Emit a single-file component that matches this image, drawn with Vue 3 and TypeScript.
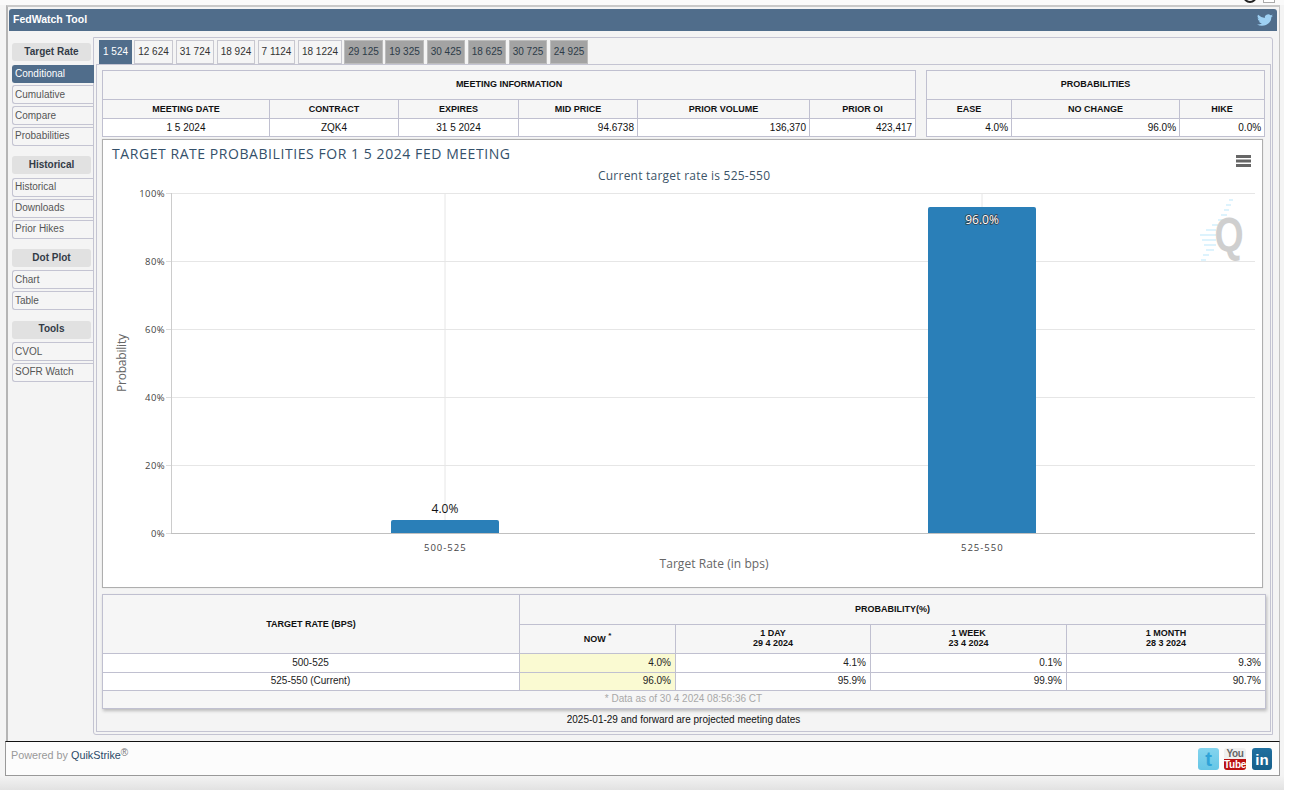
<script setup lang="ts">
interface NavGroup { title: string; items: string[] }
const nav: NavGroup[] = [
  { title: 'Target Rate', items: ['Conditional', 'Cumulative', 'Compare', 'Probabilities'] },
  { title: 'Historical', items: ['Historical', 'Downloads', 'Prior Hikes'] },
  { title: 'Dot Plot', items: ['Chart', 'Table'] },
  { title: 'Tools', items: ['CVOL', 'SOFR Watch'] },
]
const tabs = [
  { t: '1 524', w: 33, m: 2, k: 'on' }, { t: '12 624', w: 39, m: 3, k: '' }, { t: '31 724', w: 38, m: 3, k: '' },
  { t: '18 924', w: 38, m: 3, k: '' }, { t: '7 1124', w: 37, m: 3, k: '' }, { t: '18 1224', w: 44, m: 2, k: '' },
  { t: '29 125', w: 39, m: 2, k: 'off' }, { t: '19 325', w: 39, m: 3, k: 'off' }, { t: '30 425', w: 38, m: 3, k: 'off' },
  { t: '18 625', w: 38, m: 3, k: 'off' }, { t: '30 725', w: 38, m: 3, k: 'off' }, { t: '24 925', w: 38, m: 0, k: 'off' },
]
const infoCols = [167, 129, 120, 119, 172, 106]
const infoHead = ['MEETING DATE', 'CONTRACT', 'EXPIRES', 'MID PRICE', 'PRIOR VOLUME', 'PRIOR OI']
const infoRow = ['1 5 2024', 'ZQK4', '31 5 2024', '94.6738', '136,370', '423,417']
const probCols = [85, 168, 85]
const probHead = ['EASE', 'NO CHANGE', 'HIKE']
const probRow = ['4.0%', '96.0%', '0.0%']
const grid = [
  { y: 193, l: '100%' }, { y: 261, l: '80%' }, { y: 329, l: '60%' },
  { y: 397, l: '40%' }, { y: 465, l: '20%' }, { y: 533, l: '0%' },
]
const stripes = [
  [1229, 199, 4], [1226, 204, 5], [1224, 209, 5], [1221, 214, 6], [1218, 219, 8],
  [1212, 224, 6], [1206, 229, 10], [1200, 234, 16], [1202, 239, 14], [1204, 244, 12],
  [1206, 249, 8], [1203, 254, 6], [1201, 259, 5],
]
const rows = [
  ['500-525', '4.0%', '4.1%', '0.1%', '9.3%'],
  ['525-550 (Current)', '96.0%', '95.9%', '99.9%', '90.7%'],
]
const periods = [
  ['1 DAY', '29 4 2024'], ['1 WEEK', '23 4 2024'], ['1 MONTH', '28 3 2024'],
]
</script>

<template>
  <div class="page">
    <div class="topstrip">
      <span class="ring"></span>
      <span class="square"></span>
    </div>
    <div class="frame">
      <header class="bar">
        <span class="bartitle">FedWatch Tool</span>
        <svg class="bird" viewBox="0 0 24 24" width="16" height="14" preserveAspectRatio="none">
          <path fill="#9dd0f3" d="M24 4.6a9.8 9.8 0 0 1-2.8.8 4.9 4.9 0 0 0 2.2-2.7 9.8 9.8 0 0 1-3.1 1.2 4.9 4.9 0 0 0-8.4 4.5A14 14 0 0 1 1.7 3.2a4.9 4.9 0 0 0 1.5 6.6 4.9 4.9 0 0 1-2.2-.6v.1a4.9 4.9 0 0 0 3.9 4.8 4.9 4.9 0 0 1-2.2.1 4.9 4.9 0 0 0 4.6 3.4A9.9 9.9 0 0 1 0 19.5a14 14 0 0 0 7.5 2.2c9 0 14-7.5 14-14v-.6A10 10 0 0 0 24 4.6z" />
        </svg>
      </header>
      <div class="body">
        <nav class="side">
          <section v-for="g in nav" :key="g.title" class="group">
            <div class="ghead">{{ g.title }}</div>
            <div v-for="i in g.items" :key="i" class="gitem" :class="{ sel: i === 'Conditional' }">{{ i }}</div>
          </section>
        </nav>
        <div class="tabarea">
          <div class="tabs">
            <div v-for="t in tabs" :key="t.t" class="tab" :class="t.k" :style="{ width: t.w + 'px', marginRight: t.m + 'px' }">{{ t.t }}</div>
          </div>
          <main class="inner">
            <div class="tables">
              <table class="info">
                <colgroup><col v-for="(c, i) in infoCols" :key="i" :style="{ width: c + 'px' }" /></colgroup>
                <tbody>
                  <tr class="r1"><th :colspan="6">MEETING INFORMATION</th></tr>
                  <tr class="r2"><th v-for="h in infoHead" :key="h">{{ h }}</th></tr>
                  <tr class="r3">
                    <td class="c">{{ infoRow[0] }}</td>
                    <td class="c">{{ infoRow[1] }}</td>
                    <td class="c">{{ infoRow[2] }}</td>
                    <td>{{ infoRow[3] }}</td>
                    <td>{{ infoRow[4] }}</td>
                    <td>{{ infoRow[5] }}</td>
                  </tr>
                </tbody>
              </table>
              <table class="prob">
                <colgroup><col v-for="(c, i) in probCols" :key="i" :style="{ width: c + 'px' }" /></colgroup>
                <tbody>
                  <tr class="r1"><th :colspan="3">PROBABILITIES</th></tr>
                  <tr class="r2"><th v-for="h in probHead" :key="h">{{ h }}</th></tr>
                  <tr class="r3"><td v-for="p in probRow" :key="p">{{ p }}</td></tr>
                </tbody>
              </table>
            </div>
            <div class="chart">
              <svg viewBox="103 140 1159 447" width="1159" height="447" class="plot">
                <text x="112" y="159" class="title" textLength="398">TARGET RATE PROBABILITIES FOR 1 5 2024 FED MEETING</text>
                <text x="684" y="180" class="sub" text-anchor="middle" textLength="172">Current target rate is 525-550</text>
                <g fill="#666">
                  <rect x="1236" y="155" width="15" height="3" />
                  <rect x="1236" y="159.5" width="15" height="3" />
                  <rect x="1236" y="164" width="15" height="3" />
                </g>
                <g fill="#ddf3fd">
                  <rect v-for="(s, i) in stripes" :key="i" :x="s[0]" :y="s[1]" :width="s[2]" height="2" />
                </g>
                <text transform="translate(1229 251) scale(0.78 1)" class="q" text-anchor="middle">Q</text>
                <line x1="445" x2="445" y1="193" y2="533" stroke="#e6e6e6" />
                <line x1="982" x2="982" y1="193" y2="533" stroke="#e6e6e6" />
                <line v-for="g in grid.slice(0, 5)" :key="g.y" x1="171" x2="1255" :y1="g.y + 0.5" :y2="g.y + 0.5" stroke="#e6e6e6" />
                <line x1="171.5" x2="171.5" y1="193" y2="533" stroke="#ccc" />
                <line x1="171" x2="1255" y1="533.5" y2="533.5" stroke="#c0c0c0" />
                <line v-for="g in grid" :key="'t' + g.y" x1="166" x2="171" :y1="g.y + 0.5" :y2="g.y + 0.5" stroke="#ddd" />
                <text v-for="g in grid" :key="'l' + g.y" x="165" :y="g.y + 4" class="tick" text-anchor="end">{{ g.l }}</text>
                <path d="M391 533v-11a2 2 0 0 1 2-2h104a2 2 0 0 1 2 2v11z" fill="#2a7fb8" />
                <path d="M928 533V209a2 2 0 0 1 2-2h104a2 2 0 0 1 2 2v324z" fill="#2a7fb8" />
                <text x="445" y="513" class="dl" text-anchor="middle">4.0%</text>
                <text x="982" y="224" class="dl white" text-anchor="middle">96.0%</text>
                <text x="445" y="551" class="tick" text-anchor="middle" textLength="42">500-525</text>
                <text x="982" y="551" class="tick" text-anchor="middle" textLength="42">525-550</text>
                <text x="714" y="568" class="axis" text-anchor="middle" textLength="109">Target Rate (in bps)</text>
                <text transform="translate(126 363) rotate(-90)" class="axis" text-anchor="middle" textLength="58">Probability</text>
              </svg>
            </div>
            <table class="rates">
              <colgroup>
                <col style="width: 417px" /><col style="width: 156px" /><col style="width: 195px" /><col style="width: 196px" /><col style="width: 199px" />
              </colgroup>
              <tbody>
                <tr class="h1"><th rowspan="2" class="tr">TARGET RATE (BPS)</th><th colspan="4">PROBABILITY(%)</th></tr>
                <tr class="h2">
                  <th class="tr">NOW <sup>*</sup></th>
                  <th v-for="p in periods" :key="p[0]">{{ p[0] }}<br />{{ p[1] }}</th>
                </tr>
                <tr v-for="(r, i) in rows" :key="r[0]" class="d" :class="'d' + i">
                  <td class="c">{{ r[0] }}</td>
                  <td class="now">{{ r[1] }}</td>
                  <td>{{ r[2] }}</td>
                  <td>{{ r[3] }}</td>
                  <td>{{ r[4] }}</td>
                </tr>
                <tr class="foot"><td colspan="5">* Data as of 30 4 2024 08:56:36 CT</td></tr>
              </tbody>
            </table>
            <div class="note">2025-01-29 and forward are projected meeting dates</div>
          </main>
        </div>
      </div>
    </div>
    <footer class="footer">
      <div class="powered">Powered by <b>QuikStrike</b><sup>®</sup></div>
      <div class="social">
        <div class="ic tw"><span>t</span></div>
        <div class="ic yt"><span class="you">You</span><span class="tube">Tube</span></div>
        <div class="ic li"><span>in</span></div>
      </div>
    </footer>
  </div>
</template>

<style scoped>
.page {
  width: 1284px;
  height: 790px;
  background: linear-gradient(#f4f4f4 0, #f4f4f4 775px, #e2e2e2 790px);
  font-family: "Liberation Sans", Arial, sans-serif;
  overflow: hidden;
  box-sizing: border-box;
  color: #222;
}
.topstrip {
  height: 5px;
  background: #fafafa;
  position: relative;
  overflow: hidden;
}
.ring {
  position: absolute;
  left: 1243px;
  top: -11px;
  width: 10px;
  height: 10px;
  border: 2px solid #222;
  border-radius: 50%;
}
.square {
  position: absolute;
  left: 1263px;
  top: -9px;
  width: 10px;
  height: 10px;
  border: 1px solid #aaa;
  background: #fff;
}
.frame {
  margin-left: 6px;
  width: 1274px;
  height: 736px;
  box-sizing: border-box;
  border-top: 2px solid #c9c9c9;
  border-left: 2px solid #b5b5b5;
  border-right: 1px solid #c4c4c4;
  padding: 2px 0 0 1px;
  background: #f4f4f4;
}
.bar {
  width: 1268px;
  height: 22px;
  background: #506d8b;
  border-radius: 3px 3px 0 0;
  color: #fff;
  font-size: 10.5px;
  font-weight: bold;
  padding: 0 4px;
  box-sizing: border-box;
  display: flex;
  align-items: center;
  justify-content: space-between;
}
.bartitle { padding-bottom: 2px; }
.body {
  display: flex;
  padding-top: 6px;
}
.side {
  width: 81px;
  margin-left: 3px;
  padding-top: 6px;
  flex: none;
  display: flex;
  flex-direction: column;
  gap: 10px;
  position: relative;
  z-index: 1;
}
.group {
  display: flex;
  flex-direction: column;
  gap: 2px;
}
.group:last-child { margin-top: 1px; }
.group:last-child .ghead { line-height: 15px; }
.ghead {
  width: 79px;
  height: 18px;
  line-height: 17px;
  background: #e1e1e1;
  border-radius: 3px;
  text-align: center;
  font-size: 10px;
  font-weight: bold;
  color: #333b47;
  margin-bottom: 2px;
}
.group:nth-child(n + 3) .ghead { margin-bottom: 1px; }
.gitem {
  width: 81px;
  height: 19px;
  line-height: 17px;
  box-sizing: border-box;
  font-size: 10px;
  padding-left: 2px;
  color: #555;
  border: 1px solid #c4c4d2;
  border-right: 0;
  border-radius: 3px 0 0 3px;
  background: #f5f5f5;
}
.group:nth-child(2) .gitem,
.gitem:nth-child(5),
.gitem:last-child { line-height: 15px; }
.group:nth-child(3) .gitem { line-height: 17px; }
.gitem.sel {
  background: #506d8b;
  color: #fff;
  width: 82px;
  height: 18px;
  line-height: 16px;
  border-color: #506d8b;
}
.tabarea {
  width: 1180px;
  height: 698px;
  box-sizing: border-box;
  border: 1px solid #c4c4d2;
  border-radius: 0 3px 0 3px;
  padding: 2px 1px 2px 2px;
  display: flex;
  flex-direction: column;
}
.tabs {
  display: flex;
  height: 24px;
  padding-left: 3px;
}
.tab {
  box-sizing: border-box;
  height: 24px;
  line-height: 22px;
  border: 1px solid #c8c8d0;
  font-size: 10px;
  text-align: center;
  color: #333;
  background: #f5f5f5;
}
.tab.on {
  background: #506d8b;
  color: #fff;
  border-color: #506d8b;
}
.tab.off {
  background: #a3a3a3;
  border-color: #bcbcbc;
  color: #2d3b48;
}
.inner {
  flex: 1;
  border: 1px solid #c4c4d2;
  padding: 5px;
  display: flex;
  flex-direction: column;
  align-items: flex-start;
}
.tables {
  display: flex;
  gap: 10px;
}
table {
  border-collapse: collapse;
  table-layout: fixed;
  font-size: 10px;
}
th, td {
  border: 1px solid #c0c0d0;
  padding: 0 3px;
  box-sizing: border-box;
  color: #111;
}
th {
  background: #f6f6f6;
  font-weight: bold;
  text-align: center;
  font-size: 9px;
  padding-bottom: 2px;
}
td {
  background: #fff;
  text-align: right;
}
td.c { text-align: center; }
.info { width: 813px; }
.prob { width: 338px; }
.r1 { height: 29px; }
.r2 { height: 19px; }
.r2 th { padding-bottom: 0; }
.r3 { height: 18px; }
.chart {
  width: 1161px;
  height: 449px;
  box-sizing: border-box;
  border: 1px solid #aeaeae;
  background: #fff;
  margin-top: 2px;
  box-shadow: 0 0 1px #ccc;
}
.plot { display: block; }
.plot text { font-family: "Open Sans", "DejaVu Sans", sans-serif; }
.title { font-size: 14px; fill: #34506a; }
.sub { font-size: 12px; fill: #3c5468; }
.tick { font-size: 9.5px; fill: #444; letter-spacing: 0.4px; }
.axis { font-size: 12px; fill: #666; }
.dl { font-size: 12px; fill: #111; }
.dl.white { fill: #fff; stroke: #33424f; stroke-width: 1.6px; paint-order: stroke; }
.plot .q { font-family: "Liberation Sans", sans-serif; font-size: 48px; font-weight: bold; fill: #cfcfcf; }
.rates {
  width: 1163px;
  margin-top: 6px;
  box-shadow: 1px 2px 3px #bbb;
}
.rates td { padding-right: 4px; padding-bottom: 2px; }
.rates th.tr { padding-bottom: 0; }
.h1 { height: 30px; }
.h2 { height: 29px; }
.h2 th { line-height: 10px; }
sup { font-size: 8px; line-height: 0; }
.d0 { height: 19px; }
.d1 { height: 18px; }
.d td { color: #222; }
td.now { background: #fafad2; }
.foot { height: 18px; }
.foot td {
  background: #f6f6f6;
  text-align: center;
  color: #a8a8a8;
}
.note {
  width: 1163px;
  text-align: center;
  font-size: 10px;
  margin-top: 4px;
  line-height: 13px;
  color: #111;
}
.footer {
  margin-left: 5px;
  width: 1275px;
  height: 35px;
  box-sizing: border-box;
  background: #fcfcfc;
  border-top: 1px solid #111;
  border-left: 1px solid #999;
  border-right: 1px solid #999;
  border-bottom: 1px solid #999;
  display: flex;
  justify-content: space-between;
  padding-left: 5px;
}
.powered {
  font-size: 10.8px;
  color: #999;
  padding-top: 7px;
  line-height: 13px;
}
.powered b { font-weight: normal; color: #2b4a68; }
.powered sup { color: #777; font-size: 10px; vertical-align: 3px; }
.social {
  display: flex;
  margin-right: 7px;
  padding-top: 6px;
}
.ic {
  width: 21px;
  height: 22px;
  border-radius: 3px;
  box-sizing: border-box;
  overflow: hidden;
  display: flex;
  align-items: center;
  justify-content: center;
  font-weight: bold;
  color: #fff;
}
.tw {
  background: linear-gradient(#84d4ee, #66c6e6);
  font-size: 20px;
  line-height: 22px;
  color: #2fa3d8;
  font-family: "Liberation Sans", sans-serif;
  margin-right: 5px;
}
.yt {
  flex-direction: column;
  width: 22px;
  background: #f0f0f0;
  justify-content: flex-start;
  margin-right: 6px;
}
.you {
  height: 11px;
  line-height: 12px;
  font-size: 10px;
  letter-spacing: -0.3px;
  color: #666;
}
.tube {
  width: 100%;
  height: 11px;
  line-height: 11px;
  font-size: 10px;
  letter-spacing: -0.3px;
  text-align: center;
  background: #bb1111;
  color: #fff;
}
.li {
  width: 20px;
  background: linear-gradient(#1f6f9f, #175f8a);
  font-size: 15px;
}
</style>

<style>
html, body { background: #fff; margin: 0; }
</style>
